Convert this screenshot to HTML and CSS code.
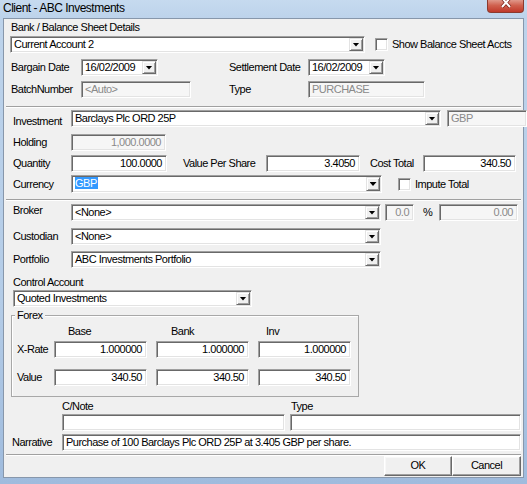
FILE: index.html
```html
<!DOCTYPE html>
<html>
<head>
<meta charset="utf-8">
<title>Client - ABC Investments</title>
<link rel="stylesheet" href="styles.css">
</head>
<body>
<div class="window">
  <div class="titlebar">
    <span class="title">Client - ABC Investments</span>
    <div class="close"><svg width="12" height="9" viewBox="0 0 12 9"><path d="M2 -2 L10 7 M10 -2 L2 7" stroke="#7a2018" stroke-width="3.4"/><path d="M2 -2 L10 7 M10 -2 L2 7" stroke="#fff" stroke-width="2"/></svg></div>
  </div>
  <div class="panel">
    <div class="row r-hdr"><span class="lbl l-bank">Bank / Balance Sheet Details</span></div>
    <div class="row r-bank">
      <div class="combo c-bank"><span class="val">Current Account 2</span><span class="drop"></span></div>
      <span class="check ch-show"></span><span class="lbl chk-lbl">Show Balance Sheet Accts</span>
    </div>
    <div class="row r-dates">
      <span class="lbl l-col1">Bargain Date</span>
      <div class="combo c-date"><span class="val">16/02/2009</span><span class="drop"></span></div>
      <span class="lbl l-settle">Settlement Date</span>
      <div class="combo c-date"><span class="val">16/02/2009</span><span class="drop"></span></div>
    </div>
    <div class="row r-batch">
      <span class="lbl l-col1">BatchNumber</span>
      <div class="field f-batch disabled">&lt;Auto&gt;</div>
      <span class="lbl l-type">Type</span>
      <div class="field f-type disabled">PURCHASE</div>
    </div>
    <div class="sep s1"></div>

    <div class="row r-invest">
      <span class="lbl l-col2 drop-lbl">Investment</span>
      <div class="combo c-invest"><span class="val">Barclays Plc ORD 25P</span><span class="drop"></span></div>
      <div class="field f-gbp disabled">GBP</div>
    </div>
    <div class="row r-holding">
      <span class="lbl l-col2">Holding</span>
      <div class="field f-holding disabled num">1,000.0000</div>
    </div>
    <div class="row r-qty">
      <span class="lbl l-col2">Quantity</span>
      <div class="field f-qty num">100.0000</div>
      <span class="lbl l-vps">Value Per Share</span>
      <div class="field f-vps num">3.4050</div>
      <span class="lbl l-cost">Cost Total</span>
      <div class="field f-cost num">340.50</div>
    </div>
    <div class="row r-ccy">
      <span class="lbl l-col2">Currency</span>
      <div class="combo c-ccy"><span class="val"><span class="sel">GBP</span></span><span class="drop"></span></div>
      <span class="check ch-impute"></span><span class="lbl chk-lbl">Impute Total</span>
    </div>
    <div class="sep s2"></div>

    <div class="row r-broker">
      <span class="lbl l-col2 lift">Broker</span>
      <div class="combo c-wide"><span class="val">&lt;None&gt;</span><span class="drop"></span></div>
      <div class="field f-pct disabled num">0.0</div>
      <span class="lbl l-pct">%</span>
      <div class="field f-comm disabled num">0.00</div>
    </div>
    <div class="row r-cust">
      <span class="lbl l-col2">Custodian</span>
      <div class="combo c-wide"><span class="val">&lt;None&gt;</span><span class="drop"></span></div>
    </div>
    <div class="row r-port">
      <span class="lbl l-col2">Portfolio</span>
      <div class="combo c-wide"><span class="val">ABC Investments Portfolio</span><span class="drop"></span></div>
    </div>
    <div class="row r-ctrl-lbl"><span class="lbl l-ctrl">Control Account</span></div>
    <div class="row r-ctrl">
      <div class="combo c-ctrl"><span class="val">Quoted Investments</span><span class="drop"></span></div>
    </div>

    <fieldset class="forex">
      <legend>Forex</legend>
      <div class="row fx-head">
        <span class="lbl fx-h1">Base</span><span class="lbl fx-h2">Bank</span><span class="lbl">Inv</span>
      </div>
      <div class="row fx-rate">
        <span class="lbl fx-lbl">X-Rate</span>
        <div class="field fx-field num">1.000000</div>
        <div class="field fx-field fx-gap num">1.000000</div>
        <div class="field fx-field fx-gap num">1.000000</div>
      </div>
      <div class="row fx-value">
        <span class="lbl fx-lbl">Value</span>
        <div class="field fx-field num">340.50</div>
        <div class="field fx-field fx-gap num">340.50</div>
        <div class="field fx-field fx-gap num">340.50</div>
      </div>
    </fieldset>

    <div class="row r-note-lbl">
      <span class="lbl l-cnote">C/Note</span><span class="lbl">Type</span>
    </div>
    <div class="row r-note">
      <div class="field f-cnote"></div>
      <div class="field f-ntype"></div>
    </div>
    <div class="row r-narr">
      <span class="lbl l-narr">Narrative</span>
      <div class="field f-narr">Purchase of 100 Barclays Plc ORD 25P at 3.405 GBP per share.</div>
    </div>
    <div class="sep s3"></div>
    <div class="row r-buttons">
      <div class="btn b-ok">OK</div>
      <div class="btn b-cancel">Cancel</div>
    </div>
  </div>
</div>
</body>
</html>
```

FILE: styles.css
```css
html, body {
  margin: 0;
  padding: 0;
}
body {
  width: 527px;
  height: 484px;
  overflow: hidden;
  font-family: "Liberation Sans", Arial, sans-serif;
  font-size: 11px;
  letter-spacing: -0.5px;
  color: #000;
}
.window {
  width: 527px;
  height: 484px;
  display: flex;
  flex-direction: column;
  background: linear-gradient(180deg, #c6daef 0px, #bdd3eb 18px, #b4cce7 300px, #9fbbdd 484px);
}
.titlebar {
  height: 18px;
  flex: none;
  display: flex;
  justify-content: space-between;
  align-items: flex-start;
}
.title {
  margin: 1px 0 0 3px;
  font-size: 12px;
  line-height: 15px;
  letter-spacing: -0.5px;
  color: #000;
}
.close {
  width: 37px;
  height: 13px;
  margin-right: 3px;
  box-sizing: border-box;
  border: 1px solid #8c3a2e;
  border-top: none;
  border-radius: 0 0 4px 4px;
  background: linear-gradient(180deg, #e0988a 0%, #d0614f 45%, #c0392a 100%);
  display: flex;
  justify-content: center;
  align-items: flex-start;
}
.close svg { display: block; }

.panel {
  flex: none;
  width: 521px;
  height: 460px;
  margin-left: 3px;
  box-sizing: border-box;
  border: 1px solid #8797ab;
  background: #f0f0f0;
}

.row {
  display: flex;
  align-items: center;
  height: 17px;
  white-space: nowrap;
}
.lbl {
  display: block;
  line-height: 13px;
  flex: none;
}
.lift { margin-top: -4px; }
.drop-lbl { margin-top: 6px; }

/* sunken edit box */
.field, .combo, .check {
  box-sizing: border-box;
  flex: none;
  height: 17px;
  border: 1px solid;
  border-color: #a0a0a0 #ffffff #ffffff #a0a0a0;
  box-shadow: inset 1px 1px 0 #696969, inset -1px -1px 0 #e3e3e3;
  background: #fff;
}
.field {
  padding: 1px 3px 0 3px;
  line-height: 13px;
  overflow: hidden;
}
.field.num { text-align: right; padding-right: 4px; }
.field.disabled { background: #f6f6f6; color: #8a8a8a; }

.combo {
  display: flex;
  align-items: stretch;
  padding: 1px;
}
.combo .val {
  flex: 1;
  padding-left: 2px;
  line-height: 13px;
  overflow: hidden;
}
.combo .sel {
  background: #3399ff;
  color: #fff;
  padding: 0 1px 0 0;
}
.drop {
  width: 14px;
  flex: none;
  box-sizing: border-box;
  background: #f0f0f0;
  border: 1px solid;
  border-color: #e3e3e3 #696969 #696969 #e3e3e3;
  box-shadow: inset 1px 1px 0 #fff, inset -1px -1px 0 #a0a0a0;
  display: flex;
  align-items: center;
  justify-content: center;
}
.drop::after {
  content: "";
  width: 7px;
  height: 4px;
  background: #000;
  clip-path: polygon(0 0, 100% 0, 50% 100%);
}
.check {
  width: 13px;
  height: 13px;
}
.chk-lbl { margin-left: 4px; }

.sep {
  height: 0;
  margin: 0 2px;
  border-top: 1px solid #a0a0a0;
  border-bottom: 1px solid #ffffff;
}

/* section 1 */
.r-hdr { height: 14px; margin-top: 1px; }
.l-bank { margin-left: 7px; }
.r-bank { margin-top: 2px; }
.c-bank { margin-left: 6px; width: 355px; }
.ch-show { margin-left: 10px; }
.r-dates { margin-top: 6px; }
.l-col1 { margin-left: 7px; width: 70px; }
.c-date { width: 77px; }
.l-settle { margin-left: 71px; width: 79px; }
.r-batch { margin-top: 5px; }
.f-batch { width: 110px; }
.l-type { margin-left: 38px; width: 79px; }
.f-type { width: 117px; }
.s1 { margin-top: 8px; }

/* section 2 */
.l-col2 { margin-left: 9px; width: 58px; }
.r-invest { margin-top: 2px; }
.c-invest { width: 370px; }
.f-gbp { margin-left: 6px; width: 80px; }
.r-holding { margin-top: 7px; }
.f-holding { width: 95px; }
.r-qty { margin-top: 4px; }
.f-qty { width: 96px; }
.l-vps { margin-left: 16px; width: 83px; }
.f-vps { width: 94px; }
.l-cost { margin-left: 10px; width: 53px; }
.f-cost { width: 93px; }
.r-ccy { margin-top: 3px; height: 18px; }
.c-ccy { width: 311px; height: 18px; }
.ch-impute { margin-left: 16px; }
.s2 { margin-top: 6px; }

/* section 3 */
.r-broker { margin-top: 3px; }
.c-wide { width: 310px; }
.f-pct { margin-left: 4px; width: 29px; }
.l-pct { margin-left: 9px; width: 16px; }
.f-comm { width: 79px; }
.r-cust { margin-top: 7px; }
.r-port { margin-top: 6px; }
.r-ctrl-lbl { height: 14px; margin-top: 7px; }
.l-ctrl { margin-left: 9px; }
.r-ctrl { margin-top: 1px; }
.c-ctrl { margin-left: 9px; width: 239px; }

/* forex group */
.forex {
  margin: 2px 0 0 7px;
  width: 348px;
  box-sizing: border-box;
  padding: 0 0 10px 0;
  border: 1px solid #a8a8a8;
  box-shadow: inset 1px 1px 0 #fff;
  min-width: 0;
}
.forex legend {
  margin-left: 3px;
  padding: 0 2px;
  line-height: 13px;
  background: #f0f0f0;
}
.fx-head { height: 14px; margin-top: 2px; }
.fx-h1 { margin-left: 56px; width: 103px; }
.fx-h2 { width: 95px; }
.fx-rate { margin-top: 3px; }
.fx-value { margin-top: 11px; }
.fx-lbl { margin-left: 5px; width: 37px; }
.fx-field { width: 93px; }
.fx-gap { margin-left: 9px; }

/* notes */
.r-note-lbl { height: 14px; margin-top: 2px; }
.l-cnote { margin-left: 58px; width: 229px; }
.r-note { margin-top: 1px; }
.f-cnote { margin-left: 58px; width: 223px; }
.f-ntype { margin-left: 5px; width: 231px; }
.r-narr { margin-top: 3px; }
.l-narr { margin-left: 8px; width: 50px; }
.f-narr { width: 459px; }
.s3 { margin-top: 3px; }

/* buttons */
.r-buttons { height: 20px; }
.btn {
  box-sizing: border-box;
  height: 20px;
  flex: none;
  border: 1px solid;
  border-color: #ffffff #696969 #696969 #ffffff;
  box-shadow: inset -1px -1px 0 #a0a0a0, inset 1px 1px 0 #f8f8f8;
  background: #f0f0f0;
  text-align: center;
  line-height: 17px;
}
.b-ok { margin-left: 380px; width: 68px; }
.b-cancel { width: 69px; }
```
